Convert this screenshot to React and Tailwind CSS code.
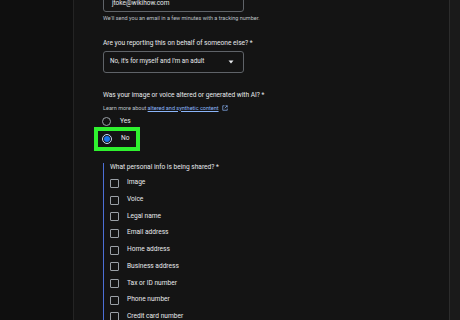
import React from "react";

const items = [
  "Image",
  "Voice",
  "Legal name",
  "Email address",
  "Home address",
  "Business address",
  "Tax or ID number",
  "Phone number",
  "Credit card number",
];

export default function App() {
  return (
    <div
      className="flex w-[460px] h-[320px] overflow-hidden bg-[#141414] text-[#e8eaed]"
      style={{ fontFamily: "Roboto, 'Liberation Sans', sans-serif" }}
    >
      <div className="w-[74px] shrink-0 bg-[#0f0f0f] border-r border-[#242424]" />
      <div className="flex-1 flex flex-col pl-[29px]">
        {/* Email input */}
        <div className="mt-[-7px] w-[141px] h-[19px] shrink-0 border border-[#5f6368] rounded-[3px] flex items-center pl-[8px] text-[6.5px] leading-[8px] text-[#e8eaed]">
          jtoke@wikihow.com
        </div>
        <div className="mt-[2px] text-[5.5px] leading-[8px] text-[#bdc1c6]">
          We'll send you an email in a few minutes with a tracking number.
        </div>

        <div className="mt-[17px] text-[6.6px] leading-[9px]">
          Are you reporting this on behalf of someone else? *
        </div>
        <div className="mt-[2.5px] w-[141px] h-[22px] shrink-0 border border-[#5f6368] rounded-[3px] flex items-center justify-between pl-[6px] pr-[9px] text-[6.3px]">
          <span>No, it's for myself and I'm an adult</span>
          <svg width="6" height="4" viewBox="0 0 6 4">
            <path d="M0.5 0.5 L5.5 0.5 L3 3.5 Z" fill="#e8eaed" />
          </svg>
        </div>

        <div className="mt-[18px] text-[6.6px] leading-[9px]">
          Was your image or voice altered or generated with AI? *
        </div>
        <div className="mt-[4px] h-[8px] text-[5.5px] leading-[8px] text-[#bdc1c6] flex items-center">
          <span>Learn more about&nbsp;</span>
          <span className="text-[#8ab4f8] underline">altered and synthetic content</span>
          <svg className="ml-[3px]" width="6" height="6" viewBox="0 0 12 12" fill="none" stroke="#8ab4f8" strokeWidth="1.4">
            <path d="M5 1.5 H1.5 V10.5 H10.5 V7" />
            <path d="M7 1.5 H10.5 V5" />
            <path d="M10.5 1.5 L5.5 6.5" />
          </svg>
        </div>

        {/* Radio Yes */}
        <div className="mt-[4.5px] flex items-center h-[11px] shrink-0">
          <div className="w-[9px] h-[9px] rounded-full border border-[#9aa0a6] ml-[-1px]" />
          <span className="ml-[9px] text-[6.6px]">Yes</span>
        </div>

        {/* Radio No highlighted */}
        <div className="ml-[-9px] w-[46px] h-[24px] shrink-0 border-[4px] border-[#2ff22f] flex items-center pl-[4px]">
          <div className="w-[10px] h-[10px] rounded-full border border-[#c8d8f8] flex items-center justify-center">
            <div className="w-[6px] h-[6px] rounded-full bg-[#1a73e8]" />
          </div>
          <span className="ml-[9px] text-[6.6px]">No</span>
        </div>

        {/* Checkbox group */}
        <div className="mt-[11.5px] border-l-[1.5px] border-[#4c6fd6] pl-[6px] flex flex-col">
          <div className="text-[6.6px] leading-[9px]">
            What personal info is being shared? *
          </div>
          <div className="mt-[3.5px] flex flex-col">
            {items.map((t) => (
              <div key={t} className="h-[16.7px] shrink-0 flex items-center">
                <div className="w-[9px] h-[9px] border border-[#9aa0a6] rounded-[1px]" />
                <span className="ml-[8px] text-[6.6px]">{t}</span>
              </div>
            ))}
          </div>
        </div>
      </div>
      <div className="w-[1.5px] shrink-0 bg-[#2c2c2c]" />
      <div className="w-[10px] shrink-0 bg-[#1a1a1a]" />
    </div>
  );
}
